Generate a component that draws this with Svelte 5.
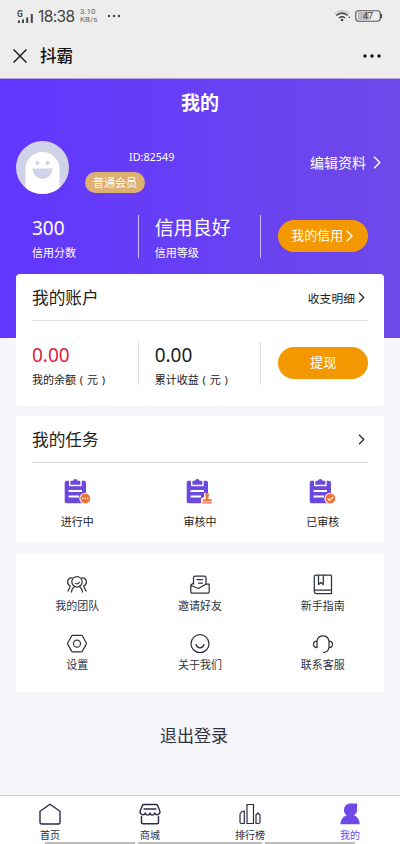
<script>
  const tasks = [
    { label: '进行中', kind: 'dots' },
    { label: '审核中', kind: 'stamp' },
    { label: '已审核', kind: 'check' }
  ];
  const links = [
    { label: '我的团队', icon: 'team' },
    { label: '邀请好友', icon: 'invite' },
    { label: '新手指南', icon: 'guide' },
    { label: '设置', icon: 'settings' },
    { label: '关于我们', icon: 'about' },
    { label: '联系客服', icon: 'service' }
  ];
  const tabs = [
    { label: '首页', icon: 'home' },
    { label: '商城', icon: 'shop' },
    { label: '排行榜', icon: 'rank' },
    { label: '我的', icon: 'me' }
  ];
</script>

{#snippet chevron(w, h)}
  <svg width={w} height={h} viewBox="0 0 7 12"><path d="M.8.8 6 6 .8 11.2" fill="none" stroke="currentColor" stroke-width="1.3" /></svg>
{/snippet}

{#snippet yuan()}<i class="paren">(</i>元<i class="paren">)</i>{/snippet}

<div class="page">
  <div class="status">
    <svg class="signal" width="17" height="14" viewBox="0 0 17 14" fill="#444">
      <text x="0" y="6.5" font-size="8.5" font-weight="700">G</text>
      <rect x="1" y="10.500" width="2" height="2.500" /><rect x="5" y="9.500" width="2" height="3.500" /><rect x="9.200" y="7.500" width="2" height="5.500" /><rect x="13.800" y="4" width="2" height="9" />
    </svg>
    <span class="time">18:38</span>
    <span class="rate">3.10<br />KB/s</span>
    <svg width="14" height="4" viewBox="0 0 14 4" fill="#444"><circle cx="2" cy="2" r="1.200" /><circle cx="7" cy="2" r="1.200" /><circle cx="12" cy="2" r="1.200" /></svg>
    <svg class="wifi" width="17" height="12" viewBox="0 0 17 12" fill="none" stroke="#444" stroke-width="1.500">
      <path d="M.8 3.600Q8-2 15.200 3.600" stroke="#c9c9c9" /><path d="M2.300 5.500Q8 .8 13.700 5.500" /><path d="M5 8Q8 5.500 11 8" /><circle cx="8" cy="10" r="1.300" fill="#444" stroke="none" /><circle cx="15.300" cy="7.300" r=".8" fill="#444" stroke="none" />
    </svg>
    <svg width="28" height="12" viewBox="0 0 28 12">
      <rect x="3" y="2" width="11" height="8" fill="#bdbdbd" /><rect x=".8" y=".8" width="24.400" height="10.400" rx="2.600" fill="none" stroke="#555" stroke-width="1.100" /><path d="M26.300 3.800v4.400" stroke="#444" stroke-width="1.500" />
      <text x="13" y="9.200" text-anchor="middle" font-size="9" fill="#333">47</text>
    </svg>
  </div>

  <div class="titlebar">
    <svg width="14" height="14" viewBox="0 0 14 14"><path d="M.6.600 13.400 13.400M13.400.600.600 13.400" stroke="#1a1a1a" stroke-width="1.400" /></svg>
    <span class="app-name">抖霸</span>
    <svg width="20" height="4" viewBox="0 0 20 4" fill="#111"><circle cx="3" cy="2" r="1.700" /><circle cx="10" cy="2" r="1.700" /><circle cx="17" cy="2" r="1.700" /></svg>
  </div>

  <header class="hero">
    <h1>我的</h1>
    <div class="profile">
      <svg width="53" height="53" viewBox="0 0 53 53">
        <defs><clipPath id="face"><circle cx="26.500" cy="26.500" r="26.500" /></clipPath></defs>
        <g clip-path="url(#face)">
          <rect width="53" height="53" fill="#d0d2e8" />
          <path d="M9.500 53V28a17 17 0 0 1 34 0V53Z" fill="#fff" />
          <circle cx="21.500" cy="22" r="2" fill="#d0d2e8" /><circle cx="31.500" cy="22" r="2" fill="#d0d2e8" />
          <path d="M16.500 27.500h20a10 10.500 0 0 1-20 0Z" fill="#d0d2e8" />
        </g>
      </svg>
      <div class="who">
        <span class="uid">ID:82549</span>
        <span class="badge">普通会员</span>
      </div>
      <span class="edit">编辑资料 {@render chevron(8, 13)}</span>
    </div>
    <div class="stats light">
      <div class="stat"><b>300</b><span>信用分数</span></div>
      <div class="stat"><b>信用良好</b><span>信用等级</span></div>
      <div class="action"><button>我的信用{@render chevron(7, 12)}</button></div>
    </div>
  </header>

  <section class="card account">
    <div class="head"><h2>我的账户</h2><span class="detail">收支明细{@render chevron(7, 11)}</span></div>
    <div class="stats">
      <div class="stat"><b class="red">0.00</b><span>我的余额{@render yuan()}</span></div>
      <div class="stat"><b>0.00</b><span>累计收益{@render yuan()}</span></div>
      <div class="action"><button>提现</button></div>
    </div>
  </section>

  <section class="card tasks">
    <div class="head"><h2>我的任务</h2><span class="detail">{@render chevron(7, 11)}</span></div>
    <div class="grid">
      {#each tasks as t}
        <div class="task">
          <svg width="27" height="26" viewBox="0 0 27 26">
            <rect x=".7" y="2.800" width="21.300" height="22.400" rx="2" fill="#6a49dc" />
            <path d="M5 2V8.200H17.700V2Z" fill="#fff" />
            <path d="M6.400 6.800V3.800a1 1 0 0 1 1-1H9a2.400 2.400 0 0 1 4.700 0h1.600a1 1 0 0 1 1 1V6.800Z" fill="#6a49dc" />
            <path d="M4.600 13H18M4.600 18.500H15" stroke="#fff" stroke-width="2" />
            {#if t.kind === 'stamp'}
              <path d="M15 26v-5.500l3-1.500v-4h6v4l2.500 1.500v5.500Z" fill="#fff" />
              <path d="M19.400 17.800a2 2 0 1 1 3.400 0l-.4 1.400v2h3.200v2.200h-9v-2.200h3.200v-2ZM16.200 24.200h9.800v1.300H16.200Z" fill="#ee7440" />
            {:else}
              <circle cx="21.200" cy="20.500" r="5.800" fill="#fff" /><circle cx="21.300" cy="20.500" r="4.900" fill="#f27337" />
              {#if t.kind === 'dots'}
                <g fill="#fff"><circle cx="18.900" cy="20.500" r=".8" /><circle cx="21.300" cy="20.500" r=".8" /><circle cx="23.700" cy="20.500" r=".8" /></g>
              {:else}
                <path d="m18.600 20.400 2 2 3.600-3.600" fill="none" stroke="#fff" stroke-width="1.200" />
              {/if}
            {/if}
          </svg>
          <span>{t.label}</span>
        </div>
      {/each}
    </div>
  </section>

  <section class="card links">
    {#each links as l}
      <div class="link">
        <svg width="22" height="22" viewBox="0 0 22 22" fill="none" stroke="#30333f" stroke-width="1.250" stroke-linecap="round" stroke-linejoin="round">
          {#if l.icon === 'team'}
            <circle cx="11" cy="7.800" r="5.200" /><path d="M9.500 9.500q2.500 1.200 3.800-1.300M6 3.800C3 3.500 1.500 5.800 1.600 8c0 2 1.200 3.300 2.700 4M16 3.800C19 3.500 20.500 5.800 20.400 8c0 2-1.200 3.300-2.700 4M4.300 12.200 2 17M17.700 12.200 20 17M8 13Q6 14.500 5.500 18M14 13q2 1.500 2.500 5" />
          {:else if l.icon === 'invite'}
            <path d="M4.500 10V3.500a1.500 1.500 0 0 1 1.500-1.500H15.500a1.500 1.500 0 0 1 1.500 1.500V10M4.500 9 1.800 11V18a1 1 0 0 0 1 1H19.200a1 1 0 0 0 1-1V10H17L9.500 14.500 2 11.500M8 5.500h5.500M9.500 9h4" />
          {:else if l.icon === 'guide'}
            <path d="M4 1H18.500a1 1 0 0 1 1 1V19.500H4a1.700 1.700 0 0 1-1.700-1.700V2.700A1.700 1.700 0 0 1 4 1ZM2.500 16.200H19.300M6.500 1.500V10.500l2.400-2 2.400 2V1.500" />
          {:else if l.icon === 'settings'}
            <path d="M6.700 2.300h8.600a1 1 0 0 1 .9.500l4 7a1.700 1.700 0 0 1 0 1.600l-4 7a1 1 0 0 1-.9.500H6.700a1 1 0 0 1-.9-.5l-4-7a1.700 1.700 0 0 1 0-1.600l4-7a1 1 0 0 1 .9-.5Z" /><circle cx="11" cy="10.700" r="3.500" />
          {:else if l.icon === 'about'}
            <circle cx="11" cy="10.700" r="9" /><path d="M7 11.500q1 3.300 4 3.300t4-3.300" />
          {:else}
            <path d="M5 8a6.200 6.700 0 0 1 12 0M5 8v6.500C2.800 14.500 1.500 13.200 1.500 11.200S2.800 8 5 8ZM17 8v6.500c2.200 0 3.500-1.300 3.500-3.300S19.200 8 17 8ZM17 14.500q-.8 4.700-5.500 4.800" />
          {/if}
        </svg>
        <span>{l.label}</span>
      </div>
    {/each}
  </section>

  <div class="logout">退出登录</div>

  <nav>
    {#each tabs as t}
      <div class="tab" class:active={t.icon === 'me'}>
        <svg width="22" height="22" viewBox="0 0 22 22" fill="none" stroke="#292c45" stroke-width="1.400" stroke-linejoin="round" stroke-linecap="round">
          {#if t.icon === 'home'}
            <path d="M1 8.300 11 1.200l10 7.100V19.500a1.500 1.500 0 0 1-1.500 1.500H2.500a1.500 1.500 0 0 1-1.500-1.500Z" />
          {:else if t.icon === 'shop'}
            <path d="M4.800 1.500H17.200a1.500 1.500 0 0 1 1.400.9L21 8.500c0 3.600-4.300 4.200-5.300 1.500-1 2.800-4 2.800-4.700 0-.7 2.800-3.700 2.800-4.700 0C5.300 12.700 1 12.100 1 8.500L3.400 2.400a1.500 1.500 0 0 1 1.400-.9ZM5 6h12M2.500 13.500v5.800a1.500 1.500 0 0 0 1.500 1.500H18a1.500 1.500 0 0 0 1.500-1.500V13.500" />
          {:else if t.icon === 'rank'}
            <path d="M8 1.500h6.500V20.500H8ZM5.300 8 2.300 9 1 11V19a1.500 1.500 0 0 0 1.500 1.500h2.800ZM17 12l2-2 2 2v7a1.500 1.500 0 0 1-1.500 1.500H17Z" stroke-width="1.200" />
          {:else}
            <path d="M11.500.500H18V7.500C18 9.800 16.800 11 14.800 12.300 18.500 13.800 20.500 16.500 20.700 21.200H1.500C1.700 16.500 4 13.800 7.800 12.300 5.700 11 5 9.200 5 7.200 5 3 7.800.500 11.500.500Z" fill="#6f49e8" stroke="none" />
          {/if}
        </svg>
        <span>{t.label}</span>
      </div>
    {/each}
    <div class="gesture"><i></i><i></i><i></i></div>
  </nav>
</div>

<style>
  :global(body) { margin: 0; }
  .page { width: 400px; height: 844px; display: flex; flex-direction: column; overflow: hidden; background: #f5f5fa; font-family: "Noto Sans", "Noto Sans CJK SC", sans-serif; color: #222; white-space: nowrap; }
  svg { display: block; flex: none; }
  .status { box-sizing: border-box; height: 32px; flex: none; background: #ededed; display: flex; align-items: center; padding: 0 17px; color: #444; font-family: Roboto, sans-serif; }
  .signal { overflow: visible; margin-top: 2px; }
  .time { width: 38px; margin-left: 4px; font-family: Inter, sans-serif; font-size: 15.500px; letter-spacing: -.6px; }
  .rate { width: 27px; margin-left: 4px; font-size: 8px; line-height: 8px; color: #666; }
  .wifi { margin-left: auto; margin-right: 4px; }
  .titlebar { box-sizing: border-box; height: 47px; flex: none; background: #ededed; display: flex; align-items: center; padding: 1px 18px 0 13px; border-bottom: 1px solid #b5a3db; }
  .app-name { font-size: 16.500px; line-height: 24px; font-weight: 500; margin-left: 13px; margin-right: auto; color: #111; }
  .hero { height: 259px; flex: none; background: linear-gradient(90deg, #6236ff, #6e49e9); color: #fff; }
  h1 { margin: 0; padding-top: 10px; font-size: 19px; line-height: 28px; font-weight: 700; text-align: center; }
  .profile { height: 53px; margin: 24px 16px 0; display: flex; }
  .who { margin-left: 16px; display: flex; flex-direction: column; align-items: flex-start; }
  .uid { margin: 8px 0 0 44px; font-size: 10.800px; line-height: 16px; }
  .badge { box-sizing: border-box; width: 60px; height: 21px; margin-top: 7px; border-radius: 11px; background: #deb071; text-align: center; font-size: 11px; line-height: 21px; }
  .edit { height: 42px; margin-left: auto; display: flex; align-items: center; gap: 7px; font-size: 14px; padding-right: 3px; }
  .stats { display: grid; grid-template-columns: repeat(3, 1fr); grid-template-rows: 43px; height: 43px; margin: 21px 16px 0; }
  .stat { display: flex; flex-direction: column; padding-left: 16px; border-right: 1px solid #ddd; }
  .light .stat { border-color: #c9bcff; }
  .stat b { flex: none; font-weight: 400; font-size: 19px; line-height: 27px; height: 29px; }
  .stat span { flex: none; font-size: 11px; line-height: 18px; }
  .paren { display: inline-block; width: 11px; text-align: center; font-style: normal; }
  .red { color: #da2442; }
  .action { display: flex; align-items: flex-start; padding: 5px 0 0 17px; }
  button { width: 90px; height: 32px; padding: 0 0 3px; border: 0; border-radius: 16px; background: #f39800; color: #fff; font: 13px "Noto Sans", "Noto Sans CJK SC", sans-serif; display: flex; align-items: center; justify-content: center; gap: 3px; box-sizing: border-box; }
  button :global(svg) { margin-top: 2px; margin-right: 2px; }
  .card { box-sizing: border-box; width: 368px; margin: 0 16px; flex: none; background: #fff; border-radius: 4px; }
  .account { height: 132px; margin-top: -64px; }
  .account .stats { margin: 21px 0 0; }
  .head { height: 46px; margin: 0 16px; border-bottom: 1px solid #dedee2; display: flex; align-items: center; justify-content: space-between; }
  h2 { margin: 0; padding-top: 1px; font-size: 16.700px; line-height: 24px; font-weight: 400; }
  .detail { font-size: 11.800px; display: flex; align-items: center; gap: 3px; padding-right: 3px; }
  .tasks { height: 127px; margin-top: 10px; }
  .grid { display: grid; grid-template-columns: repeat(3, 1fr); padding-top: 15px; }
  .task, .link, .tab { display: flex; flex-direction: column; align-items: center; }
  .task span { font-size: 11px; line-height: 16px; margin-top: 10px; }
  .links { height: 139px; margin-top: 10px; padding-top: 21px; display: grid; grid-template-columns: repeat(3, 1fr); grid-auto-rows: 59px; }
  .link span { font-size: 11px; line-height: 16px; margin-top: 2px; color: #30333f; }
  .logout { margin-top: 32px; text-align: center; font-size: 17px; line-height: 24px; color: #30333f; padding-right: 12px; }
  nav { box-sizing: border-box; margin-top: auto; height: 49px; flex: none; background: #fff; border-top: 1px solid #ccccd2; display: grid; grid-template-columns: repeat(4, 1fr); grid-template-rows: 46px 2px; }
  .tab { padding-top: 7px; height: 39px; }
  .tab span { font-size: 10px; line-height: 14px; margin-top: 3px; color: #292c45; }
  .tab.active span { color: #6f49e8; }
  .gesture { grid-column: 1 / -1; display: flex; justify-content: center; gap: 3px; }
  .gesture i { width: 90px; height: 2px; background: #bcbcbc; }
  .gesture i:nth-child(2) { width: 124px; }
</style>
